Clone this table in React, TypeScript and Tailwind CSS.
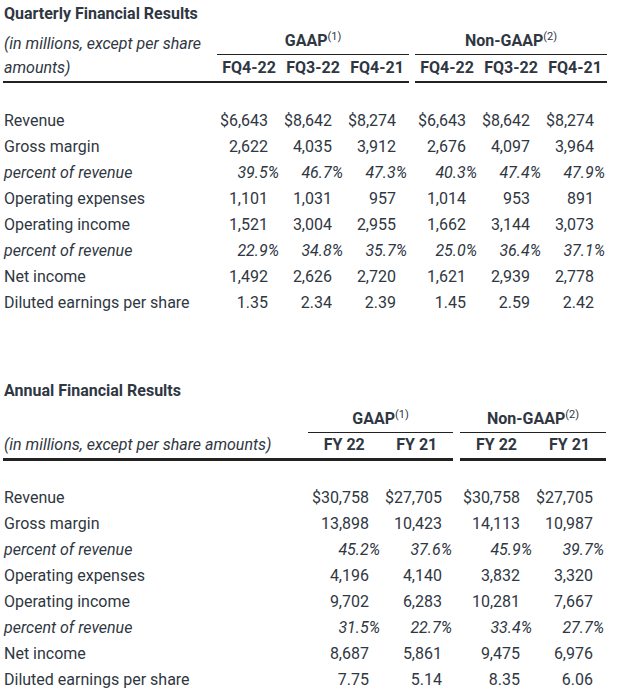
import React from 'react'

type Row = { label: string; pct?: boolean; vals: string[] }

const quarterly: Row[] = [
  { label: 'Revenue', vals: ['$6,643', '$8,642', '$8,274', '$6,643', '$8,642', '$8,274'] },
  { label: 'Gross margin', vals: ['2,622', '4,035', '3,912', '2,676', '4,097', '3,964'] },
  { label: 'percent of revenue', pct: true, vals: ['39.5%', '46.7%', '47.3%', '40.3%', '47.4%', '47.9%'] },
  { label: 'Operating expenses', vals: ['1,101', '1,031', '957', '1,014', '953', '891'] },
  { label: 'Operating income', vals: ['1,521', '3,004', '2,955', '1,662', '3,144', '3,073'] },
  { label: 'percent of revenue', pct: true, vals: ['22.9%', '34.8%', '35.7%', '25.0%', '36.4%', '37.1%'] },
  { label: 'Net income', vals: ['1,492', '2,626', '2,720', '1,621', '2,939', '2,778'] },
  { label: 'Diluted earnings per share', vals: ['1.35', '2.34', '2.39', '1.45', '2.59', '2.42'] },
]

const annual: Row[] = [
  { label: 'Revenue', vals: ['$30,758', '$27,705', '$30,758', '$27,705'] },
  { label: 'Gross margin', vals: ['13,898', '10,423', '14,113', '10,987'] },
  { label: 'percent of revenue', pct: true, vals: ['45.2%', '37.6%', '45.9%', '39.7%'] },
  { label: 'Operating expenses', vals: ['4,196', '4,140', '3,832', '3,320'] },
  { label: 'Operating income', vals: ['9,702', '6,283', '10,281', '7,667'] },
  { label: 'percent of revenue', pct: true, vals: ['31.5%', '22.7%', '33.4%', '27.7%'] },
  { label: 'Net income', vals: ['8,687', '5,861', '9,475', '6,976'] },
  { label: 'Diluted earnings per share', vals: ['7.75', '5.14', '8.35', '6.06'] },
]

function Group({ name, note }: { name: string; note: string }) {
  return (
    <span className="font-bold">
      {name}
      <span className="text-[11px] font-normal relative -top-[6px]">({note})</span>
    </span>
  )
}

function Cell({ v, pct }: { v: string; pct?: boolean }) {
  return (
    <div className={pct ? 'text-right italic pr-[2px]' : 'text-right pr-[13px]'}>{v}</div>
  )
}

function QuarterlyTable() {
  return (
    <div>
      <div className="h-[28px] leading-[28px] font-bold pl-px">Quarterly Financial Results</div>

      {/* header */}
      <div className="grid grid-cols-[214px_192px_6px_192px] grid-rows-[27px_28px]">
        <div className="row-span-2 border-b-2 border-[#222] italic leading-6 pt-[4px] pl-px pr-2">
          (in millions, except per share amounts)
        </div>
        <div className="border-b border-[#222] text-center leading-[26px]">
          <Group name="GAAP" note="1" />
        </div>
        <div className="row-span-2"></div>
        <div className="border-b border-[#222] text-center leading-[26px]">
          <Group name="Non-GAAP" note="2" />
        </div>
        <div className="grid grid-cols-3 border-b-2 border-[#222] font-bold text-center leading-[26px]">
          <div>FQ4-22</div>
          <div>FQ3-22</div>
          <div>FQ4-21</div>
        </div>
        <div className="grid grid-cols-3 border-b-2 border-[#222] font-bold text-center leading-[26px]">
          <div>FQ4-22</div>
          <div>FQ3-22</div>
          <div>FQ4-21</div>
        </div>
      </div>

      <div className="h-[25px]"></div>

      {quarterly.map((r, i) => (
        <div key={i} className="grid grid-cols-[214px_64px_64px_64px_6px_64px_64px_64px] h-[26px] leading-[26px]">
          <div className={r.pct ? 'italic pl-px' : 'pl-px'}>{r.label}</div>
          <Cell v={r.vals[0]} pct={r.pct} />
          <Cell v={r.vals[1]} pct={r.pct} />
          <Cell v={r.vals[2]} pct={r.pct} />
          <div></div>
          <Cell v={r.vals[3]} pct={r.pct} />
          <Cell v={r.vals[4]} pct={r.pct} />
          <Cell v={r.vals[5]} pct={r.pct} />
        </div>
      ))}
    </div>
  )
}

function AnnualTable() {
  return (
    <div>
      <div className="h-[28px] leading-[28px] font-bold pl-px">Annual Financial Results</div>

      {/* header */}
      <div className="grid grid-cols-[305px_145px_7px_146px] grid-rows-[28px_28px]">
        <div></div>
        <div className="border-b border-[#222] text-center leading-[27px]">
          <Group name="GAAP" note="1" />
        </div>
        <div className="row-span-2"></div>
        <div className="border-b border-[#222] text-center leading-[27px]">
          <Group name="Non-GAAP" note="2" />
        </div>
        <div className="border-b-[3px] border-[#222] italic leading-[24px] pl-px">
          (in millions, except per share amounts)
        </div>
        <div className="grid grid-cols-2 border-b-[3px] border-[#222] font-bold text-center leading-[24px]">
          <div>FY 22</div>
          <div>FY 21</div>
        </div>
        <div className="grid grid-cols-2 border-b-[3px] border-[#222] font-bold text-center leading-[24px]">
          <div>FY 22</div>
          <div>FY 21</div>
        </div>
      </div>

      <div className="h-[24px]"></div>

      {annual.map((r, i) => (
        <div key={i} className="grid grid-cols-[305px_73px_72px_7px_73px_73px] h-[26px] leading-[26px]">
          <div className={r.pct ? 'italic pl-px' : 'pl-px'}>{r.label}</div>
          <div className={r.pct ? 'text-right italic pr-px' : 'text-right pr-[12px]'}>{r.vals[0]}</div>
          <div className={r.pct ? 'text-right italic pr-px' : 'text-right pr-[11px]'}>{r.vals[1]}</div>
          <div></div>
          <div className={r.pct ? 'text-right italic pr-px' : 'text-right pr-[13px]'}>{r.vals[2]}</div>
          <div className={r.pct ? 'text-right italic pr-[2px]' : 'text-right pr-[13px]'}>{r.vals[3]}</div>
        </div>
      ))}
    </div>
  )
}

export default function App() {
  return (
    <div className="w-[619px] h-[696px] bg-white text-[#2f3742] text-[16px] font-['Roboto',sans-serif] pl-[3px] overflow-hidden">
      <QuarterlyTable />
      <div className="h-[61px]"></div>
      <AnnualTable />
    </div>
  )
}
